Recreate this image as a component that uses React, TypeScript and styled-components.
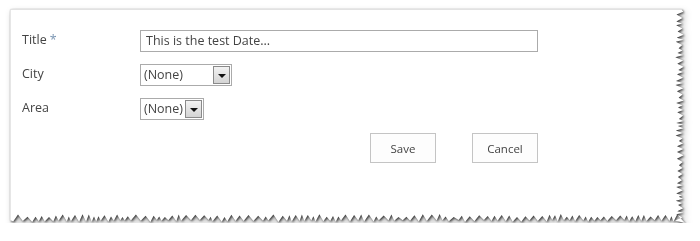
import React from "react";
import styled, { createGlobalStyle } from "styled-components";

const Global = createGlobalStyle`
  html, body { margin: 0; padding: 0; background: #ffffff; }
  body { font-family: "Open Sans", "Noto Sans", sans-serif; color: #444444; }
`;

const PANEL_W = 675;
const PANEL_H = 214;

function buildTornClip(w: number, h: number): string {
  let seed = 12345;
  const rnd = () => {
    seed = (seed * 1103515245 + 12345) % 2147483648;
    return seed / 2147483648;
  };
  const pts: string[] = [];
  pts.push(`0px 0px`);
  let y = 0;
  pts.push(`${w - 4}px 0px`);
  while (y < h - 8) {
    const step = 3 + rnd() * 4;
    const outX = w - 1 - rnd() * 2;
    const inX = w - 6 - rnd() * 4;
    pts.push(`${outX.toFixed(1)}px ${(y + step / 2).toFixed(1)}px`);
    y += step;
    pts.push(`${inX.toFixed(1)}px ${y.toFixed(1)}px`);
  }
  pts.push(`${w}px ${h}px`);
  let x = w - 4;
  while (x > 4) {
    const step = 4 + rnd() * 6;
    const inY = h - 6 - rnd() * 3;
    const outY = h - 1 - rnd() * 2;
    pts.push(`${(x - step / 2).toFixed(1)}px ${inY.toFixed(1)}px`);
    x -= step;
    pts.push(`${x.toFixed(1)}px ${outY.toFixed(1)}px`);
  }
  pts.push(`0px ${h - 3}px`);
  return `polygon(${pts.join(", ")})`;
}

const Page = styled.div`
  padding: 9px 0 0 10px;
`;

const ShadowWrap = styled.div`
  width: ${PANEL_W}px;
  height: ${PANEL_H}px;
  filter: drop-shadow(1px 1px 1px rgba(0, 0, 0, 0.75))
    drop-shadow(2px 3px 3px rgba(0, 0, 0, 0.25));
`;

const Panel = styled.div`
  box-sizing: border-box;
  width: 100%;
  height: 100%;
  background: #ffffff;
  border-top: 1px solid #e2e2e2;
  border-left: 1px solid #e6e6e6;
  padding: 20px 0 0 11px;
`;

const Form = styled.div`
  width: 516px;
  display: grid;
  grid-template-columns: 118px 1fr;
  row-gap: 12px;
  align-items: center;
`;

const Label = styled.div`
  font-size: 12.5px;
  color: #444444;
  line-height: 22px;
  height: 22px;
  margin-top: -2px;
`;

const Required = styled.span`
  color: #7b96b3;
  margin-left: 3px;
`;

const TextInput = styled.div`
  box-sizing: border-box;
  height: 22px;
  width: 398px;
  border: 1px solid #ababab;
  background: #ffffff;
  font-size: 12.5px;
  color: #444444;
  line-height: 20px;
  padding-left: 5px;
  white-space: nowrap;
`;

const Select = styled.div<{ $w: number }>`
  box-sizing: border-box;
  width: ${(p) => p.$w}px;
  height: 22px;
  border: 1px solid #ababab;
  background: #ffffff;
  display: flex;
  align-items: center;
  justify-content: space-between;
  padding: 0 1px 0 3px;
`;

const SelectText = styled.span`
  font-size: 12.5px;
  color: #444444;
  line-height: 20px;
`;

const ArrowButton = styled.div`
  box-sizing: border-box;
  width: 17px;
  height: 18px;
  border: 1px solid #8a8a8a;
  background: linear-gradient(#f2f2f2, #d4d4d4);
  display: flex;
  align-items: center;
  justify-content: center;
`;

const Triangle = styled.div`
  width: 0;
  height: 0;
  border-left: 4px solid transparent;
  border-right: 4px solid transparent;
  border-top: 4px solid #111111;
  margin-top: 1px;
`;

const Buttons = styled.div`
  grid-column: 1 / span 2;
  display: flex;
  justify-content: flex-end;
  gap: 36px;
  margin-top: 1px;
`;

const Button = styled.button`
  box-sizing: border-box;
  width: 66px;
  height: 30px;
  border: 1px solid #c4c4c4;
  background: #fdfdfd;
  font-family: "Open Sans", "Noto Sans", sans-serif;
  font-size: 11.5px;
  color: #444444;
  padding: 0;
  cursor: pointer;
`;

function Dropdown({ width }: { width: number }) {
  return (
    <Select $w={width}>
      <SelectText>(None)</SelectText>
      <ArrowButton>
        <Triangle />
      </ArrowButton>
    </Select>
  );
}

export default function App() {
  const clip = React.useMemo(() => buildTornClip(PANEL_W, PANEL_H), []);
  return (
    <>
      <Global />
      <Page>
        <ShadowWrap>
          <Panel style={{ clipPath: clip }}>
            <Form>
              <Label>
                Title<Required>*</Required>
              </Label>
              <TextInput>This is the test Date...</TextInput>
              <Label>City</Label>
              <div>
                <Dropdown width={92} />
              </div>
              <Label>Area</Label>
              <div>
                <Dropdown width={64} />
              </div>
              <Buttons>
                <Button>Save</Button>
                <Button>Cancel</Button>
              </Buttons>
            </Form>
          </Panel>
        </ShadowWrap>
      </Page>
    </>
  );
}
